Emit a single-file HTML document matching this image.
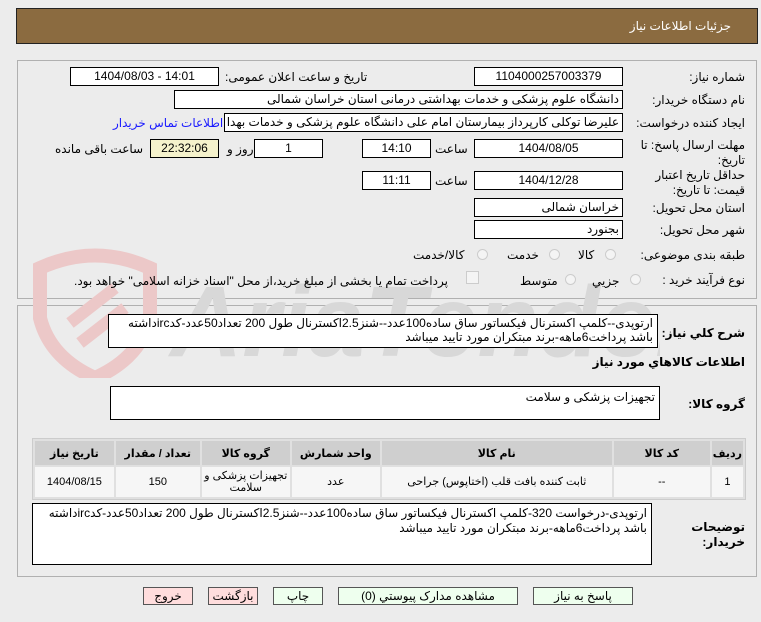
<!DOCTYPE html>
<html><head><meta charset="utf-8"><style>
body{margin:0;width:761px;height:622px;background:#ececec;font-family:"Liberation Sans","DejaVu Sans",sans-serif;font-size:11px;color:#000;position:relative;overflow:hidden}
.a{position:absolute}
.hdr{left:16px;top:8px;width:742px;height:36px;background:#8b6b40;border:1px solid #222;box-sizing:border-box}
.hdr span{position:absolute;right:26px;top:10px;color:#fff;font-size:12px}
.pan{border:1px solid #b0b0b0;box-sizing:border-box}
.box{position:absolute;background:#fff;border:1px solid #000;box-sizing:border-box;height:19px;line-height:17px;text-align:center;font-size:12px}
.r{direction:rtl;text-align:right;padding-right:3px}
.l{position:absolute;direction:rtl;white-space:nowrap;font-size:12px}
.rad{position:absolute;width:11px;height:11px;border-radius:50%;border:1px solid #ccc;background:#f4f4f4;box-sizing:border-box}
.ta{position:absolute;background:#fff;border:1px solid #000;box-sizing:border-box;direction:rtl;text-align:right;padding:2px 4px;font-size:12px;line-height:16px}
table{position:absolute;left:32px;top:438px;width:714px;border-collapse:separate;border-spacing:2px;background:#e0e0e0;border:1px solid #ccc}
th{background:#cfcfcf;height:22px;font-size:11px;font-weight:bold}
td{background:#f6f6f6;height:28px;text-align:center;font-size:11px;line-height:12px}
.btn{position:absolute;top:587px;height:18px;border:1px solid #555;box-sizing:border-box;text-align:center;line-height:16px;font-size:12px}
</style></head><body>
<div class="a hdr"><span>جزئیات اطلاعات نیاز</span></div>
<div class="a pan" style="left:17px;top:60px;width:740px;height:239px"></div>
<div class="a pan" style="left:17px;top:305px;width:740px;height:272px"></div>

<!-- watermark -->
<svg class="a" style="left:20px;top:248px" width="640" height="130">
<path d="M20 20 Q75 -5 130 20 L130 70 Q120 110 75 130 Q30 110 20 70 Z" fill="none" stroke="#ecc8c8" stroke-width="14"/>
<path d="M50 75 L95 40 M60 95 L105 60" stroke="#ecc8c8" stroke-width="12"/>
<text x="150" y="108" font-family="Liberation Sans" font-size="100" font-weight="bold" font-style="italic" fill="#d8d8d8">AriaTender.net</text>
</svg>

<div class="l" style="right:16px;top:70px">شماره نیاز:</div>
<div class="box" style="left:474px;top:67px;width:149px">1104000257003379</div>
<div class="l" style="left:225px;top:70px">تاریخ و ساعت اعلان عمومی:</div>
<div class="box" style="left:70px;top:67px;width:149px">1404/08/03 - 14:01</div>

<div class="l" style="right:16px;top:93px">نام دستگاه خریدار:</div>
<div class="box r" style="left:174px;top:90px;width:449px">دانشگاه علوم پزشکی و خدمات بهداشتی درمانی استان خراسان شمالی</div>

<div class="l" style="right:16px;top:116px">ایجاد کننده درخواست:</div>
<div class="box r" style="left:224px;top:113px;width:399px;overflow:hidden">علیرضا توکلی کارپرداز بیمارستان امام علی دانشگاه علوم پزشکی و خدمات بهدا</div>
<div class="l" style="left:113px;top:116px;color:#1a1aff">اطلاعات تماس خریدار</div>

<div class="l" style="right:16px;top:138px;line-height:15px">مهلت ارسال پاسخ: تا<br>تاریخ:</div>
<div class="box" style="left:474px;top:139px;width:149px">1404/08/05</div>
<div class="l" style="left:435px;top:142px">ساعت</div>
<div class="box" style="left:362px;top:139px;width:69px">14:10</div>
<div class="box" style="left:254px;top:139px;width:69px">1</div>
<div class="l" style="left:227px;top:142px">روز و</div>
<div class="box" style="left:150px;top:139px;width:69px;background:#f5f2cc">22:32:06</div>
<div class="l" style="left:55px;top:142px">ساعت باقی مانده</div>

<div class="l" style="right:16px;top:168px;line-height:15px">حداقل تاریخ اعتبار<br>قیمت: تا تاریخ:</div>
<div class="box" style="left:474px;top:171px;width:149px">1404/12/28</div>
<div class="l" style="left:435px;top:174px">ساعت</div>
<div class="box" style="left:362px;top:171px;width:69px">11:11</div>

<div class="l" style="right:16px;top:201px">استان محل تحویل:</div>
<div class="box r" style="left:474px;top:198px;width:149px">خراسان شمالی</div>
<div class="l" style="right:16px;top:223px">شهر محل تحویل:</div>
<div class="box r" style="left:474px;top:220px;width:149px">بجنورد</div>

<div class="l" style="right:16px;top:248px">طبقه بندی موضوعی:</div>
<div class="rad" style="left:605px;top:249px"></div><div class="l" style="left:578px;top:248px">کالا</div>
<div class="rad" style="left:549px;top:249px"></div><div class="l" style="left:507px;top:248px">خدمت</div>
<div class="rad" style="left:477px;top:249px"></div><div class="l" style="left:413px;top:248px">کالا/خدمت</div>

<div class="l" style="right:16px;top:273px">نوع فرآیند خرید :</div>
<div class="rad" style="left:630px;top:274px"></div><div class="l" style="left:592px;top:274px">جزیي</div>
<div class="rad" style="left:565px;top:274px"></div><div class="l" style="left:520px;top:274px">متوسط</div>
<div class="a" style="left:466px;top:271px;width:11px;height:11px;border:1px solid #ccc;background:#f4f4f4"></div>
<div class="l" style="left:74px;top:274px">پرداخت تمام یا بخشی از مبلغ خرید،از محل "اسناد خزانه اسلامی" خواهد بود.</div>

<div class="l" style="right:16px;top:326px;font-weight:bold">شرح کلي نياز:</div>
<div class="ta" style="left:108px;top:314px;width:550px;height:34px;line-height:14px;padding-top:1px">ارتوپدی--کلمپ اکسترنال فیکساتور ساق ساده100عدد--شنز2.5اکسترنال طول 200 تعداد50عدد-کدircداشته باشد پرداخت6ماهه-برند مبتکران مورد تایید میباشد</div>
<div class="l" style="right:16px;top:355px;font-weight:bold">اطلاعات کالاهاي مورد نياز</div>
<div class="l" style="right:16px;top:397px;font-weight:bold">گروه کالا:</div>
<div class="ta" style="left:110px;top:386px;width:550px;height:34px">تجهیزات پزشکی و سلامت</div>

<table dir="rtl">
<tr><th style="width:24px">ردیف</th><th style="width:94px">کد کالا</th><th style="width:228px">نام کالا</th><th style="width:86px">واحد شمارش</th><th style="width:86px">گروه کالا</th><th style="width:82px">تعداد / مقدار</th><th>تاریخ نیاز</th></tr>
<tr><td>1</td><td>--</td><td>ثابت کننده بافت قلب (اختاپوس) جراحی</td><td>عدد</td><td>تجهیزات پزشکی و سلامت</td><td>150</td><td>1404/08/15</td></tr>
</table>

<div class="l" style="right:16px;top:520px;font-weight:bold;line-height:15px">توضیحات<br>خریدار:</div>
<div class="ta" style="left:32px;top:503px;width:620px;height:62px;line-height:15px">ارتوپدی-درخواست 320-کلمپ اکسترنال فیکساتور ساق ساده100عدد--شنز2.5اکسترنال طول 200 تعداد50عدد-کدircداشته باشد پرداخت6ماهه-برند مبتکران مورد تایید میباشد</div>

<div class="btn" style="left:143px;width:50px;background:#fdd">خروج</div>
<div class="btn" style="left:208px;width:50px;background:#fdd">بازگشت</div>
<div class="btn" style="left:273px;width:50px;background:#efe">چاپ</div>
<div class="btn" style="left:338px;width:180px;background:#efe">مشاهده مدارک پیوستي (0)</div>
<div class="btn" style="left:533px;width:100px;background:#efe">پاسخ به نیاز</div>
</body></html>
